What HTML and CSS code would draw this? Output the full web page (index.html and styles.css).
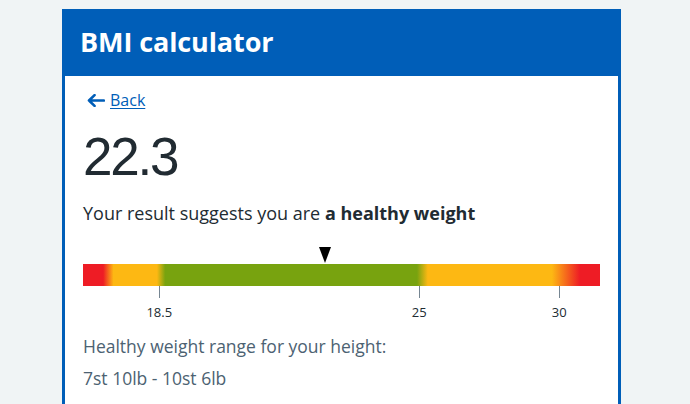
FILE: index.html
```html
<!DOCTYPE html>
<html lang="en">
<head>
<meta charset="utf-8">
<title>BMI calculator</title>
<link rel="stylesheet" href="styles.css">
</head>
<body>
<div class="card">
  <header class="card-header">
    <h1 class="title">BMI calculator</h1>
  </header>
  <main class="card-body">
    <a class="back" href="#">
      <svg class="back-icon" viewBox="0 0 20 14" width="19" height="13" aria-hidden="true"><path d="M19 7H3M9 1.2L3 7l6 5.8" fill="none" stroke="#005eb8" stroke-width="2.8" stroke-linecap="round" stroke-linejoin="round"/></svg>
      <span class="back-text">Back</span>
    </a>
    <div class="score">22.3</div>
    <p class="result">Your result suggests you are <strong>a healthy weight</strong></p>
    <div class="scale">
      <div class="marker" style="left: 46.8%"></div>
      <div class="bar"></div>
      <div class="tick" style="left: 14.76%"><span class="tick-label">18.5</span></div>
      <div class="tick" style="left: 65.05%"><span class="tick-label">25</span></div>
      <div class="tick" style="left: 92.13%"><span class="tick-label">30</span></div>
    </div>
    <p class="range-label">Healthy weight range for your height:</p>
    <p class="range-value">7st 10lb - 10st 6lb</p>
  </main>
</div>
</body>
</html>
```
FILE: styles.css
```css
html, body {
  margin: 0;
  padding: 0;
  background: #f0f4f5;
  font-family: "Open Sans", "Liberation Sans", Arial, sans-serif;
  color: #212b32;
}

.card {
  margin: 9px 0 0 62px;
  width: 559px;
}

.card-header {
  background: #005eb8;
  padding: 17px 18px 18px;
}

.title {
  margin: 0;
  color: #ffffff;
  font-size: 27px;
  line-height: 32px;
  font-weight: 700;
  letter-spacing: -0.1px;
}

.card-body {
  background: #ffffff;
  border-left: 3px solid #005eb8;
  border-right: 3px solid #005eb8;
  padding: 12px 18px 40px;
  min-height: 300px;
}

.back {
  display: flex;
  align-items: center;
  height: 24px;
  color: #005eb8;
  text-decoration: none;
  font-size: 16px;
  line-height: 24px;
}

.back-icon {
  margin-left: 3px;
  margin-right: 5px;
  flex: none;
}

.back-text {
  text-decoration: underline;
  text-underline-offset: 2px;
}

.score {
  margin-top: 15px;
  font-family: "Liberation Sans", Arial, sans-serif;
  font-size: 53px;
  line-height: 60px;
  letter-spacing: -2.2px;
  color: #212b32;
}

.result {
  margin: 13px 0 0;
  font-size: 18px;
  line-height: 26px;
}

.result strong {
  font-weight: 700;
}

.scale {
  position: relative;
  margin-top: 20px;
  height: 76px;
  padding-top: 18px;
  box-sizing: border-box;
}

.marker {
  position: absolute;
  top: 1px;
  width: 0;
  height: 0;
  transform: translateX(-50%);
  border-left: 6px solid transparent;
  border-right: 6px solid transparent;
  border-top: 16px solid #000000;
}

.bar {
  height: 22px;
  background: linear-gradient(to right,
    #ee1c25 0%, #ee1c25 3.9%,
    #fdb813 5.9%, #fdb813 14.3%,
    #78a30f 15.9%, #78a30f 64.6%,
    #fdb813 66.7%, #fdb813 90.7%,
    #ee1c25 96.1%, #ee1c25 100%);
}

.tick {
  position: absolute;
  top: 40px;
  width: 1px;
  height: 12px;
  background: #768692;
}

.tick-label {
  position: absolute;
  top: 18px;
  left: 0;
  transform: translateX(-50%);
  font-size: 13px;
  line-height: 16px;
  color: #212b32;
  white-space: nowrap;
}

.range-label {
  margin: 12px 0 0;
  font-size: 17.5px;
  line-height: 24px;
  color: #4c6272;
}

.range-value {
  margin: 8px 0 0;
  font-size: 17.5px;
  line-height: 24px;
  color: #4c6272;
}
```
